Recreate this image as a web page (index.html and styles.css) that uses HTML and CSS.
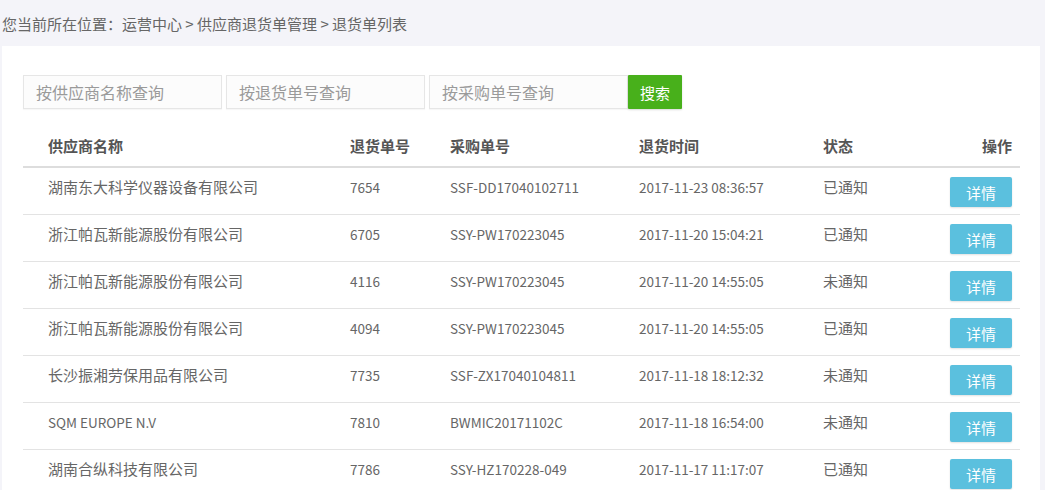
FILE: index.html
```html
<!DOCTYPE html>
<html lang="zh-CN">
<head>
<meta charset="utf-8">
<title>退货单列表</title>
<link rel="stylesheet" href="styles.css">
</head>
<body>
<div class="crumb">您当前所在位置：运营中心 &gt; 供应商退货单管理 &gt; 退货单列表</div>
<div class="card">
  <div class="search">
    <input class="field" type="text" placeholder="按供应商名称查询">
    <input class="field" type="text" placeholder="按退货单号查询">
    <input class="field" type="text" placeholder="按采购单号查询">
    <button class="btn-search">搜索</button>
  </div>
  <table class="list">
    <colgroup>
      <col class="c1"><col class="c2"><col class="c3"><col class="c4"><col class="c5"><col class="c6">
    </colgroup>
    <thead>
      <tr><th class="first">供应商名称</th><th>退货单号</th><th>采购单号</th><th>退货时间</th><th>状态</th><th class="last">操作</th></tr>
    </thead>
    <tbody>
      <tr><td class="first">湖南东大科学仪器设备有限公司</td><td class="latin">7654</td><td class="latin">SSF-DD17040102711</td><td class="latin">2017-11-23 08:36:57</td><td>已通知</td><td class="last"><button class="btn-detail">详情</button></td></tr>
      <tr><td class="first">浙江帕瓦新能源股份有限公司</td><td class="latin">6705</td><td class="latin">SSY-PW170223045</td><td class="latin">2017-11-20 15:04:21</td><td>已通知</td><td class="last"><button class="btn-detail">详情</button></td></tr>
      <tr><td class="first">浙江帕瓦新能源股份有限公司</td><td class="latin">4116</td><td class="latin">SSY-PW170223045</td><td class="latin">2017-11-20 14:55:05</td><td>未通知</td><td class="last"><button class="btn-detail">详情</button></td></tr>
      <tr><td class="first">浙江帕瓦新能源股份有限公司</td><td class="latin">4094</td><td class="latin">SSY-PW170223045</td><td class="latin">2017-11-20 14:55:05</td><td>已通知</td><td class="last"><button class="btn-detail">详情</button></td></tr>
      <tr><td class="first">长沙振湘劳保用品有限公司</td><td class="latin">7735</td><td class="latin">SSF-ZX17040104811</td><td class="latin">2017-11-18 18:12:32</td><td>未通知</td><td class="last"><button class="btn-detail">详情</button></td></tr>
      <tr><td class="first latin">SQM EUROPE N.V</td><td class="latin">7810</td><td class="latin">BWMIC20171102C</td><td class="latin">2017-11-18 16:54:00</td><td>未通知</td><td class="last"><button class="btn-detail">详情</button></td></tr>
      <tr><td class="first">湖南合纵科技有限公司</td><td class="latin">7786</td><td class="latin">SSY-HZ170228-049</td><td class="latin">2017-11-17 11:17:07</td><td>已通知</td><td class="last"><button class="btn-detail">详情</button></td></tr>
    </tbody>
  </table>
</div>
</body>
</html>
```

FILE: styles.css
```css
html, body {
  margin: 0;
  padding: 0;
}
body {
  background: #f4f4f9;
  font-family: "Noto Sans CJK SC", "Noto Sans", sans-serif;
  font-size: 15px;
  color: #666;
  overflow: hidden;
}
.crumb {
  height: 46px;
  line-height: 48px;
  padding-left: 2px;
  color: #666;
  font-size: 15px;
}
.card {
  margin-left: 2px;
  width: 1038px;
  background: #fff;
  padding: 29px 0 0 21px;
  box-sizing: border-box;
  min-height: 460px;
}
.search {
  display: flex;
  align-items: stretch;
  gap: 4px;
  height: 34px;
}
.field {
  width: 199px;
  height: 34px;
  box-sizing: border-box;
  border: 1px solid #e6e6e6;
  background: #fcfcfc;
  padding: 0 12px;
  font-family: inherit;
  font-size: 16px;
  color: #666;
  outline: none;
  box-shadow: 0 1px 1px rgba(0,0,0,0.03);
}
.field::placeholder {
  color: #9a9a9a;
}
.btn-search {
  margin-left: -4px;
  width: 54px;
  height: 34px;
  border: none;
  background: #48b01b;
  color: #fff;
  font-family: inherit;
  font-size: 15px;
  padding: 0;
  border-radius: 1px;
  box-shadow: 0 1px 2px rgba(0,0,0,0.15);
}
.list {
  margin-top: 16px;
  width: 997px;
  border-collapse: collapse;
  table-layout: fixed;
}
.c1 { width: 327px; }
.c2 { width: 100px; }
.c3 { width: 189px; }
.c4 { width: 184px; }
.c5 { width: 97px; }
.c6 { width: 100px; }
.list th {
  height: 41px;
  padding: 0;
  text-align: left;
  font-weight: bold;
  color: #555;
  border-bottom: 2px solid #dddddd;
  vertical-align: middle;
  line-height: 20px;
}
.list td {
  padding: 9px 0 7px 0;
  height: 30px;
  vertical-align: top;
  line-height: 20px;
  border-bottom: 1px solid #e3e3e3;
  color: #666;
  white-space: nowrap;
}
.list td.latin {
  font-size: 13.5px;
}
.list .first {
  padding-left: 25px;
}
.list .last {
  text-align: right;
  padding-right: 8px;
}
.btn-detail {
  width: 62px;
  height: 30px;
  border: none;
  border-radius: 2px;
  background: #5bc0de;
  color: #fff;
  font-family: inherit;
  font-size: 15px;
  padding: 0;
  box-shadow: 0 1px 2px rgba(0,0,0,0.12);
  vertical-align: top;
}
```
